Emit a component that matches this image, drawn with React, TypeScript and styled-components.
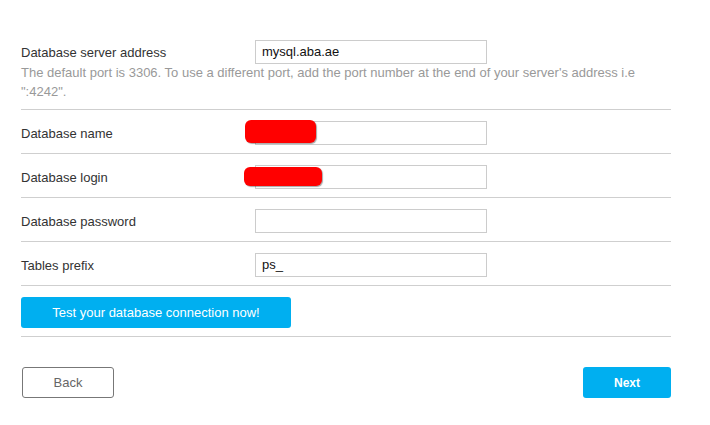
import React from "react";
import styled, { createGlobalStyle } from "styled-components";

const GlobalStyle = createGlobalStyle`
  html, body { margin: 0; padding: 0; background: #fff; }
  body { font-family: "Liberation Sans", Arial, sans-serif; font-size: 13px; color: #333; }
  * { box-sizing: border-box; }
`;

const Page = styled.div`
  width: 650px;
  margin: 29px 0 0 21px;
`;

const Row = styled.div`
  border-bottom: 1px solid #cfcfcf;
  padding: 11px 0 8px;
`;

const Field = styled.div`
  display: flex;
  align-items: center;
  height: 24px;
`;

const Label = styled.label`
  width: 234px;
  color: #333;
  font-size: 13px;
`;

const InputWrap = styled.div`
  position: relative;
  width: 232px;
  height: 24px;
`;

const Input = styled.div`
  width: 100%;
  height: 100%;
  border: 1px solid #cccccc;
  background: #fff;
  color: #111;
  font-size: 13px;
  line-height: 22px;
  padding-left: 6px;
`;

const Redact = styled.div<{ $l: number; $t: number; $w: number; $h: number }>`
  position: absolute;
  left: ${(p) => p.$l}px;
  top: ${(p) => p.$t}px;
  width: ${(p) => p.$w}px;
  height: ${(p) => p.$h}px;
  background: #ff0000;
  border-radius: 6px;
  box-shadow: 1px 1px 1px rgba(0, 0, 0, 0.35);
`;

const Help = styled.p`
  margin: -1px 0 0;
  color: #999;
  font-size: 13px;
  line-height: 19px;
`;

const PrimaryButton = styled.button<{ $w: number }>`
  width: ${(p) => p.$w}px;
  height: 31px;
  border: none;
  border-radius: 3px;
  background: #00aff0;
  color: #fff;
  font-family: "Liberation Sans", Arial, sans-serif;
  font-size: 13px;
  padding: 0;
  cursor: pointer;
`;

const Footer = styled.div`
  display: flex;
  justify-content: space-between;
  align-items: center;
  margin-top: 30px;
  padding-left: 1px;
`;

const BackButton = styled.button`
  width: 92px;
  height: 31px;
  border: 1px solid #777;
  border-radius: 3px;
  background: #fff;
  color: #666;
  font-family: "Liberation Sans", Arial, sans-serif;
  font-size: 13px;
  padding: 0;
`;

const NextButton = styled(PrimaryButton)`
  height: 31px;
  font-weight: bold;
  font-size: 12px;
`;

type F = { label: string; value?: string; redact?: { l: number; t: number; w: number; h: number } };

const fields: F[] = [
  { label: "Database name", redact: { l: -10, t: -1, w: 71, h: 23 } },
  { label: "Database login", redact: { l: -11, t: 2, w: 78, h: 19 } },
  { label: "Database password" },
  { label: "Tables prefix", value: "ps_" },
];

export default function App() {
  return (
    <>
      <GlobalStyle />
      <Page>
        <Row>
          <Field>
            <Label>Database server address</Label>
            <InputWrap>
              <Input>mysql.aba.ae</Input>
            </InputWrap>
          </Field>
          <Help>
            The default port is 3306. To use a different port, add the port number at the end of your server's address i.e
            ":4242".
          </Help>
        </Row>
        {fields.map((f) => (
          <Row key={f.label}>
            <Field>
              <Label>{f.label}</Label>
              <InputWrap>
                <Input>{f.value ?? ""}</Input>
                {f.redact && <Redact $l={f.redact.l} $t={f.redact.t} $w={f.redact.w} $h={f.redact.h} />}
              </InputWrap>
            </Field>
          </Row>
        ))}
        <Row>
          <PrimaryButton $w={270}>Test your database connection now!</PrimaryButton>
        </Row>
        <Footer>
          <BackButton>Back</BackButton>
          <NextButton $w={88}>Next</NextButton>
        </Footer>
      </Page>
    </>
  );
}
